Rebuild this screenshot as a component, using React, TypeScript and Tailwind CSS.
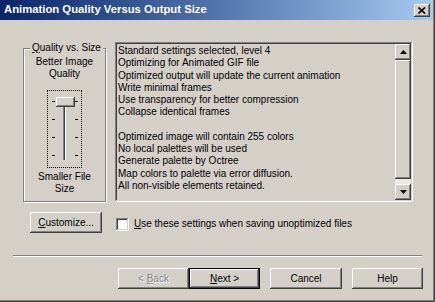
import React from "react";

const raised =
  "bg-[#d4d0c8] shadow-[inset_-1px_-1px_#404040,inset_1px_1px_#ffffff,inset_-2px_-2px_#808080]";
const sunken =
  "shadow-[inset_-1px_-1px_#ffffff,inset_1px_1px_#808080,inset_-2px_-2px_#d4d0c8,inset_2px_2px_#404040]";

const lines = [
  "Standard settings selected, level 4",
  "Optimizing for Animated GIF file",
  "Optimized output will update the current animation",
  "Write minimal frames",
  "Use transparency for better compression",
  "Collapse identical frames",
  "",
  "Optimized image will contain 255 colors",
  "No local palettes will be used",
  "Generate palette by Octree",
  "Map colors to palette via error diffusion.",
  "All non-visible elements retained.",
];

function Arrow({ up }: { up?: boolean }) {
  return (
    <svg width="7" height="4" viewBox="0 0 7 4">
      <path d={up ? "M3.5 0 L7 4 L0 4 Z" : "M0 0 L7 0 L3.5 4 Z"} fill="#000" />
    </svg>
  );
}

function Slider() {
  const ticks = [10, 28, 46, 64];
  return (
    <svg width="33" height="76" viewBox="0 0 33 76">
      {ticks.map((y) => (
        <g key={y}>
          <rect x="4" y={y} width="3" height="1" fill="#000" />
          <rect x="27" y={y} width="3" height="1" fill="#000" />
        </g>
      ))}
      <rect x="15" y="7" width="1" height="62" fill="#808080" />
      <rect x="16" y="7" width="1" height="62" fill="#404040" />
      <rect x="17" y="7" width="1" height="62" fill="#ffffff" />
      <rect x="8" y="6" width="19" height="10" fill="#404040" />
      <rect x="8" y="6" width="18" height="9" fill="#ffffff" />
      <rect x="9" y="7" width="17" height="8" fill="#808080" />
      <rect x="9" y="7" width="16" height="7" fill="#d4d0c8" />
    </svg>
  );
}

function Button({
  children,
  width,
  isDefault,
  disabled,
}: {
  children: React.ReactNode;
  width: string;
  isDefault?: boolean;
  disabled?: boolean;
}) {
  return (
    <div className={`${width} h-[21px] ${isDefault ? "border border-black" : ""}`}>
      <div
        className={`w-full h-full flex items-center justify-center ${raised} ${
          disabled ? "text-[#808080] [text-shadow:1px_1px_#ffffff]" : "text-black"
        }`}
      >
        {children}
      </div>
    </div>
  );
}

export default function App() {
  return (
    <div className="w-[435px] h-[302px] bg-[#d4d0c8] flex flex-col font-['Liberation_Sans',Arial,sans-serif] text-[10px] text-black shadow-[inset_-1px_-1px_#404040,inset_-2px_-2px_#808080] overflow-hidden">
      {/* Title bar */}
      <div className="h-[20px] mr-[2px] flex items-center justify-between pl-[4px] pr-[3px] bg-gradient-to-r from-[#0a246a] to-[#a6caf0]">
        <span className="text-white font-bold text-[11.3px] leading-none">
          Animation Quality Versus Output Size
        </span>
        <div className={`w-[16px] h-[13px] flex items-center justify-center ${raised}`}>
          <svg width="8" height="7" viewBox="0 0 8 7">
            <path d="M0.5 0.5 L7 6.5 M7 0.5 L0.5 6.5" stroke="#000" strokeWidth="1.7" />
          </svg>
        </div>
      </div>

      {/* Main row */}
      <div className="mt-[22px] flex items-end pl-[23px] gap-[9px]">
        <div className="relative w-[83px] h-[154px] border border-[#808080] shadow-[inset_1px_1px_#ffffff,1px_1px_#ffffff] flex flex-col items-center pt-[7px] leading-[12px]">
          <span className="absolute -top-[7px] left-[6px] px-[2px] bg-[#d4d0c8] leading-[12px]">
            <u>Q</u>uality vs. Size
          </span>
          <span>Better Image</span>
          <span>Quality</span>
          <div className="mt-[10px] w-[35px] h-[78px] border border-dotted border-black">
            <Slider />
          </div>
          <span className="mt-[3px]">Smaller File</span>
          <span>Size</span>
        </div>

        <div className={`w-[298px] h-[160px] p-[2px] flex ${sunken}`}>
          <div className="flex-1 pl-[1px] pt-[1px] leading-[12.25px] whitespace-nowrap overflow-hidden">
            {lines.map((l, i) => (
              <div key={i} className="h-[12.25px]">
                {l}
              </div>
            ))}
          </div>
          <div className="w-[16px] flex flex-col">
            <div className={`h-[16px] flex items-center justify-center ${raised}`}>
              <Arrow up />
            </div>
            <div className={`h-[119px] ${raised}`} />
            <div className="flex-1 bg-[#ebe9e5]" />
            <div className={`h-[16px] flex items-center justify-center ${raised}`}>
              <Arrow />
            </div>
          </div>
        </div>
      </div>

      {/* Customize row */}
      <div className="mt-[10px] flex items-center pl-[30px]">
        <Button width="w-[72px]">
          <span>
            <u>C</u>ustomize...
          </span>
        </Button>
        <div className={`ml-[14px] mt-[3px] w-[13px] h-[13px] bg-white ${sunken}`} />
        <span className="ml-[5px] mt-[2px]">
          <u>U</u>se these settings when saving unoptimized files
        </span>
      </div>

      {/* Separator */}
      <div className="mt-[22px] mx-[13px] w-[409px] h-[2px] border-t border-[#808080] border-b border-b-white" />

      {/* Buttons */}
      <div className="mt-[11px] flex pl-[118px]">
        <Button width="w-[71px]" disabled>
          <span>
            &lt; <u>B</u>ack
          </span>
        </Button>
        <Button width="w-[71px]" isDefault>
          <span>
            <u>N</u>ext &gt;
          </span>
        </Button>
        <div className="ml-[10px]">
          <Button width="w-[72px]">Cancel</Button>
        </div>
        <div className="ml-[10px]">
          <Button width="w-[71px]">Help</Button>
        </div>
      </div>
    </div>
  );
}
